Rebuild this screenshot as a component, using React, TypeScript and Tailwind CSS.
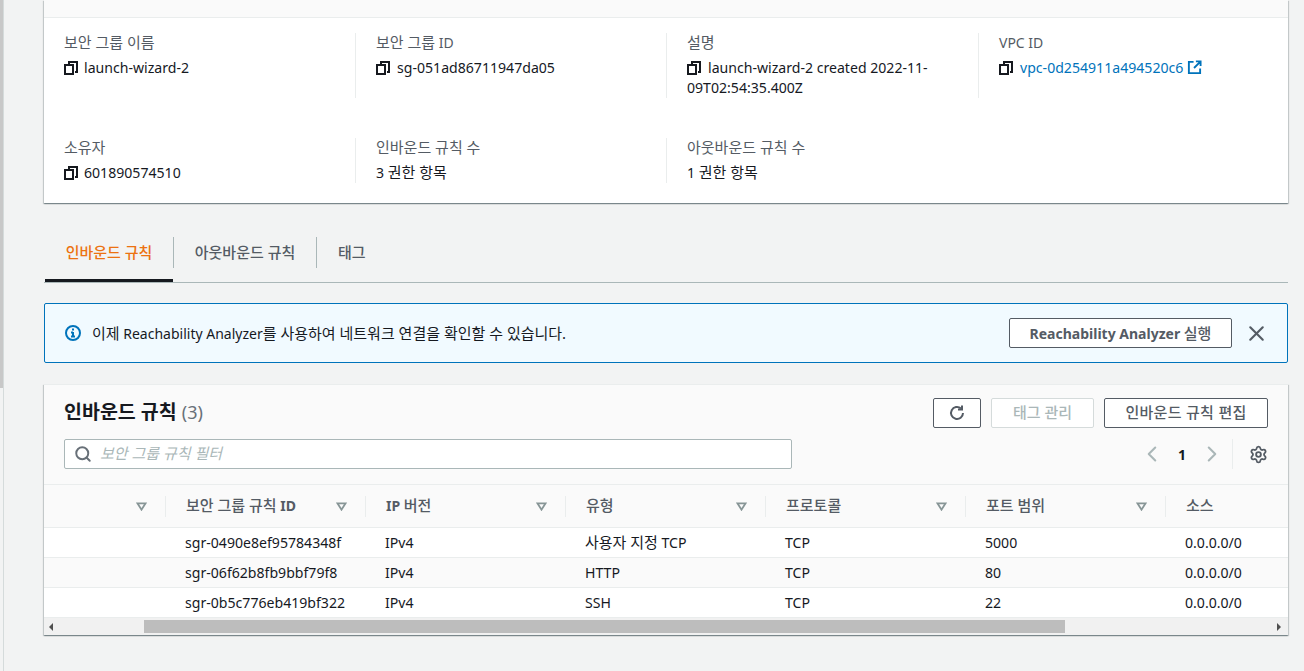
import React from "react";
import { Search, X, ChevronLeft, ChevronRight, Settings } from "lucide-react";

const CopyIcon = () => (
  <svg viewBox="0 0 14 14" className="w-[14px] h-[14px] text-[#16191f]" fill="none" stroke="currentColor" strokeWidth="2" shapeRendering="crispEdges">
    <path d="M5 3V1h8v10h-2" />
    <rect x="1" y="4" width="8" height="9" />
  </svg>
);

// hangul runs a bit wider than the latin text next to it
const Ko = ({ children, medium }: { children: React.ReactNode; medium?: boolean }) => (
  <span className={`text-[15px] leading-none ${medium ? "font-medium" : ""}`}>{children}</span>
);

const Field = ({ label, value, copy, link, first }: { label: React.ReactNode; value: React.ReactNode; copy?: boolean; link?: boolean; first?: boolean }) => (
  <div className={`px-5 min-w-0 ${first ? "" : "border-l border-[#eaeded]"}`}>
    <div className="text-[14px] leading-5 text-[#545b64]">{label}</div>
    <div className={`mt-[5px] text-[14.1px] leading-5 ${link ? "text-[#0073bb]" : "text-[#16191f]"}`}>
      {copy && <span className={`inline-block align-[-2px] ${first ? "mr-[6px]" : "mr-[7px]"}`}><CopyIcon /></span>}
      {value}
    </div>
  </div>
);

const Sort = () => (
  <svg viewBox="0 0 12 10" className="w-[11px] h-[9px] text-[#879596]" fill="none" stroke="currentColor" strokeWidth="2">
    <path d="M1.5 1.5h9L6 8.5z" />
  </svg>
);

const columns: React.ReactNode[] = [
  "",
  <><Ko medium>보안 그룹 규칙</Ko> ID</>,
  <>IP <Ko medium>버전</Ko></>,
  <Ko medium>유형</Ko>,
  <Ko medium>프로토콜</Ko>,
  <Ko medium>포트 범위</Ko>,
  <Ko medium>소스</Ko>,
];

const rows: React.ReactNode[][] = [
  ["sgr-0490e8ef95784348f", "IPv4", <><Ko>사용자 지정</Ko> TCP</>, "TCP", "5000", "0.0.0.0/0"],
  ["sgr-06f62b8fb9bbf79f8", "IPv4", "HTTP", "TCP", "80", "0.0.0.0/0"],
  ["sgr-0b5c776eb419bf322", "IPv4", "SSH", "TCP", "22", "0.0.0.0/0"],
];

const cardShadow = "shadow-[0_1px_1px_0_rgba(0,28,36,0.3),1px_1px_1px_0_rgba(0,28,36,0.15),-1px_1px_1px_0_rgba(0,28,36,0.15)]";

export default function App() {
  return (
    <div
      className="h-[671px] w-[1304px] overflow-hidden bg-[#f2f3f3] text-[14px] text-[#16191f] flex"
      style={{ fontFamily: '"Noto Sans", "Noto Sans CJK KR", sans-serif' }}
    >
      <div className="w-1 shrink-0 border-r border-[#d5dbdb] flex flex-col">
        <div className="h-[388px] bg-[#c8c8c8]" />
      </div>
      <main className="ml-10 w-[1244px]">
        {/* Details card */}
        <section className={`bg-white ${cardShadow}`}>
          <div className="h-[18px] bg-[#fafafa] border-b border-[#eaeded]" />
          <div className="grid grid-cols-[311px_311px_312px_310px] pt-[15px] pb-[20px] gap-y-[40px]">
            <Field first label={<Ko>보안 그룹 이름</Ko>} value="launch-wizard-2" copy />
            <Field label={<><Ko>보안 그룹</Ko> ID</>} value="sg-051ad86711947da05" copy />
            <Field label={<Ko>설명</Ko>} value="launch-wizard-2 created 2022-11-09T02:54:35.400Z" copy />
            <Field
              label="VPC ID"
              copy
              link
              value={
                <>
                  vpc-0d254911a494520c6
                  <svg viewBox="0 0 16 16" className="inline-block w-[15px] h-[15px] ml-1 align-[-2px]" fill="none" stroke="currentColor" strokeWidth="2">
                    <path d="M7 2H2v12h12V9M9.5 1.5h5V6.5M14 2L7.5 8.5" />
                  </svg>
                </>
              }
            />
            <Field first label={<Ko>소유자</Ko>} value="601890574510" copy />
            <Field label={<Ko>인바운드 규칙 수</Ko>} value={<>3 <Ko>권한 항목</Ko></>} />
            <Field label={<Ko>아웃바운드 규칙 수</Ko>} value={<>1 <Ko>권한 항목</Ko></>} />
          </div>
        </section>

        {/* Tabs */}
        <div className="mt-[34px] flex h-[46px] border-b border-[#aab7b8] text-[15px] font-medium text-[#545b64]">
          <div className="relative flex h-[31px] w-[129px] ml-[1px] items-center justify-center text-[#ec7211] border-r border-[#aab7b8]">
            인바운드 규칙
            <span className="absolute left-0 right-0 top-[42px] h-[3px] bg-[#16191f]" />
          </div>
          <div className="flex h-[31px] w-[143px] items-center justify-center border-r border-[#aab7b8]">아웃바운드 규칙</div>
          <div className="flex h-[31px] px-[21px] items-center">태그</div>
        </div>

        {/* Info alert */}
        <div className="mt-[20px] h-[60px] flex items-center rounded-[2px] border border-[#0073bb] bg-[#f1faff] pl-5 pr-[18px]">
          <svg viewBox="0 0 16 16" className="w-4 h-4 text-[#0073bb] shrink-0" fill="none" stroke="currentColor" strokeWidth="2">
            <circle cx="8" cy="8" r="7" />
            <path d="M8 3.5v2M8 7v5M6 7.5h2M6 11.5h4" />
          </svg>
          <span className="ml-[11px] flex-1 text-[14px]">
            <Ko>이제</Ko> Reachability Analyzer<Ko>를 사용하여 네트워크 연결을 확인할 수 있습니다.</Ko>
          </span>
          <button className="h-[30px] w-[223px] rounded-[2px] border border-[#545b64] bg-white text-[14px] font-bold text-[#545b64]">
            Reachability Analyzer <Ko medium>실행</Ko>
          </button>
          <X className="ml-3 w-[25px] h-[25px] text-[#545b64]" strokeWidth={2} />
        </div>

        {/* Rules table */}
        <section className={`mt-[21px] bg-white border-t border-[#eaeded] ${cardShadow}`}>
          <div className="bg-[#fafafa] h-[100px] border-b border-[#eaeded] px-5 pt-[13px]">
            <div className="flex items-center h-[30px]">
              <h2 className="pb-[2px] text-[19.5px] font-bold leading-[30px] text-[#16191f]">
                인바운드 규칙 <span className="font-normal text-[#687078] text-[18px]">(3)</span>
              </h2>
              <div className="ml-auto flex gap-[10px]">
                <button className="h-[30px] w-[48px] flex items-center justify-center rounded-[2px] border border-[#545b64] bg-white text-[#545b64]">
                  <svg viewBox="0 0 16 16" className="w-4 h-4" fill="none" stroke="currentColor" strokeWidth="2">
                    <path d="M14 8a6 6 0 1 1-2-4.5" />
                    <path d="M13 .5V4.5H9" />
                  </svg>
                </button>
                <button className="h-[30px] w-[103px] pb-[2px] rounded-[2px] border border-[#d5dbdb] bg-white text-[15px] font-medium text-[#aab7b8]">태그 관리</button>
                <button className="h-[30px] w-[164px] pb-[2px] rounded-[2px] border border-[#545b64] bg-white text-[15px] tracking-[0.3px] font-medium text-[#545b64]">인바운드 규칙 편집</button>
              </div>
            </div>
            <div className="mt-[11px] flex items-center">
              <div className="flex h-[30px] w-[728px] items-center rounded-[2px] border border-[#aab7b8] bg-white pl-[9px]">
                <Search className="w-[18px] h-[18px] text-[#687078]" strokeWidth={2.6} />
                <span className="ml-2 pb-[2px] text-[15px] italic text-[#aab7b8]">보안 그룹 규칙 필터</span>
              </div>
              <div className="ml-auto flex items-center">
                <ChevronLeft className="w-[26px] h-[26px] text-[#aab7b8]" strokeWidth={1.9} />
                <span className="w-[34px] text-center text-[14px] font-bold text-[#16191f]">1</span>
                <ChevronRight className="w-[26px] h-[26px] text-[#aab7b8]" strokeWidth={1.9} />
                <span className="ml-[7px] h-[30px] w-px bg-[#eaeded]" />
                <Settings className="ml-4 w-[19px] h-[19px] text-[#545b64]" strokeWidth={2.3} />
              </div>
            </div>
          </div>

          <div className="overflow-hidden">
            <div className="flex h-[43px] w-[1400px] border-b border-[#eaeded] bg-[#fafafa]">
              {columns.map((c, i) => (
                <div key={i} className="flex w-[200px] shrink-0 items-center pl-5 first:w-[122px]">
                  <span className="flex-1 pb-[2px] font-bold text-[#545b64]">{c}</span>
                  {i < columns.length - 1 && (
                    <>
                      <Sort />
                      <span className="ml-[18px] h-[21px] w-px bg-[#eaeded]" />
                    </>
                  )}
                </div>
              ))}
            </div>
            {rows.map((r, i) => (
              <div key={i} className={`flex h-[30px] w-[1400px] items-center border-b border-[#eaeded] text-[14.1px] ${i === 1 ? "bg-[#fafafa]" : "bg-white"}`}>
                <div className="w-[121px] shrink-0" />
                {r.map((v, j) => (
                  <div key={j} className="w-[200px] shrink-0 pl-5 text-[#16191f]">{v}</div>
                ))}
              </div>
            ))}
          </div>

          {/* Horizontal scrollbar */}
          <div className="flex h-[17px] items-center bg-[#f1f1f1]">
            <span className="ml-[5px] h-0 w-0 border-y-[4px] border-r-[4px] border-y-transparent border-r-[#505050]" />
            <div className="ml-[91px] h-[13px] w-[921px] bg-[#bdbdbd]" />
            <span className="ml-auto mr-[7px] h-0 w-0 border-y-[4px] border-l-[4px] border-y-transparent border-l-[#505050]" />
          </div>
        </section>
      </main>
    </div>
  );
}
